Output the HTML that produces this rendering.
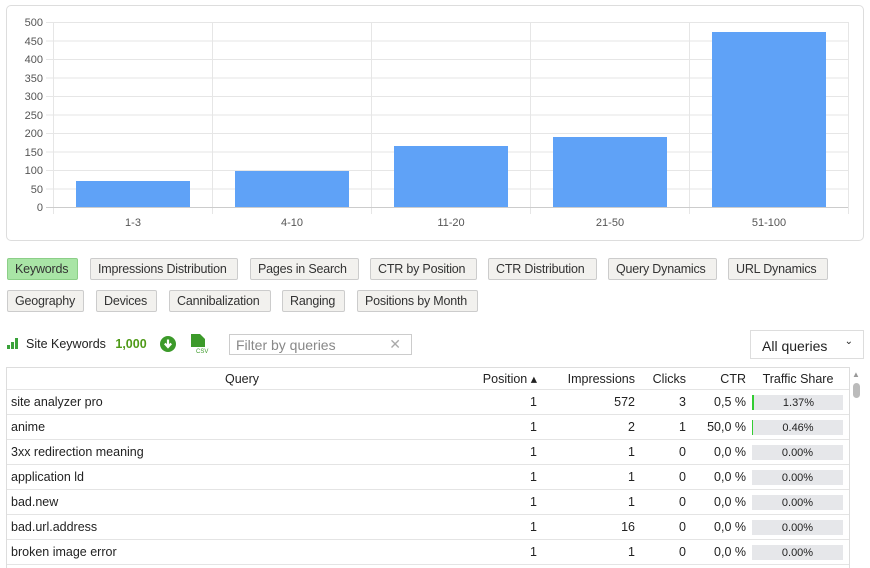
<!DOCTYPE html><html><head><style>
body{margin:0;width:870px;height:568px;overflow:hidden;background:#fff;font-family:"Liberation Sans",sans-serif;font-size:12.5px;color:#222;position:relative}
.card{position:absolute;left:6px;top:5px;width:858px;height:236px;border:1px solid #ddd;border-radius:5px;box-sizing:border-box}
.btn{position:absolute;height:22px;line-height:21px;padding:0 7px;background:#f2f1ee;border:1px solid #ccc;border-radius:2px;box-sizing:border-box;font-size:12.5px;letter-spacing:-0.2px;color:#333}
.btn.on{background:#a9e5a6;border-color:#8ccf88}
.abs{position:absolute}
table{border-collapse:collapse;font-size:12.5px;table-layout:fixed}
td,th{height:24px;padding:0;border-bottom:1px solid #e4e4e4;white-space:nowrap;vertical-align:middle;line-height:14px}
th{font-weight:normal;height:21px;background:#fff}
.r{text-align:right}
.bar{width:91px;height:15px;background:#e6e7ea;font-size:11px;text-align:center;line-height:16px;margin-left:6px;position:relative;box-sizing:border-box}
</style></head><body>
<div class="card"></div>
<svg class="abs" style="left:0;top:0" width="870" height="240" font-family="Liberation Sans" font-size="11" fill="#555">
<g stroke="#e6e6e6" stroke-width="1">
<line x1="46" y1="22.5" x2="848" y2="22.5"/><line x1="46" y1="41" x2="848" y2="41"/><line x1="46" y1="59.5" x2="848" y2="59.5"/><line x1="46" y1="78" x2="848" y2="78"/><line x1="46" y1="96.5" x2="848" y2="96.5"/><line x1="46" y1="115" x2="848" y2="115"/><line x1="46" y1="133.5" x2="848" y2="133.5"/><line x1="46" y1="152" x2="848" y2="152"/><line x1="46" y1="170.5" x2="848" y2="170.5"/><line x1="46" y1="189" x2="848" y2="189"/>
<line x1="53.5" y1="22" x2="53.5" y2="214"/><line x1="212.5" y1="22" x2="212.5" y2="214"/><line x1="371.5" y1="22" x2="371.5" y2="214"/><line x1="530.5" y1="22" x2="530.5" y2="214"/><line x1="689.5" y1="22" x2="689.5" y2="214"/><line x1="848.5" y1="22" x2="848.5" y2="214"/>
</g>
<g fill="#5fa2f7"><rect x="76" y="181" width="114" height="26"/><rect x="235" y="171" width="114" height="36"/><rect x="394" y="146" width="114" height="61"/><rect x="553" y="137" width="114" height="70"/><rect x="712" y="32" width="114" height="175"/></g>
<line x1="46" y1="207.5" x2="848" y2="207.5" stroke="#ccc"/>
<g text-anchor="end"><text x="43" y="26">500</text><text x="43" y="63">400</text><text x="43" y="82">350</text><text x="43" y="45">450</text><text x="43" y="100">300</text><text x="43" y="119">250</text><text x="43" y="137">200</text><text x="43" y="156">150</text><text x="43" y="174">100</text><text x="43" y="193">50</text><text x="43" y="211">0</text></g>
<g text-anchor="middle"><text x="133" y="226">1-3</text><text x="292" y="226">4-10</text><text x="451" y="226">11-20</text><text x="610" y="226">21-50</text><text x="769" y="226">51-100</text></g>
</svg>
<div class="btn on" style="left:7px;top:258px;width:71px">Keywords</div>
<div class="btn" style="left:90px;top:258px;width:148px">Impressions Distribution</div>
<div class="btn" style="left:250px;top:258px;width:109px">Pages in Search</div>
<div class="btn" style="left:370px;top:258px;width:107px">CTR by Position</div>
<div class="btn" style="left:488px;top:258px;width:109px">CTR Distribution</div>
<div class="btn" style="left:608px;top:258px;width:109px">Query Dynamics</div>
<div class="btn" style="left:728px;top:258px;width:100px">URL Dynamics</div>
<div class="btn" style="left:7px;top:290px;width:77px">Geography</div>
<div class="btn" style="left:96px;top:290px;width:61px">Devices</div>
<div class="btn" style="left:169px;top:290px;width:102px">Cannibalization</div>
<div class="btn" style="left:282px;top:290px;width:63px">Ranging</div>
<div class="btn" style="left:357px;top:290px;width:121px">Positions by Month</div>
<svg class="abs" style="left:7px;top:338px" width="12" height="12"><rect x="0" y="7" width="3" height="4" fill="#3aa23a"/><rect x="4" y="4" width="3" height="7" fill="#3aa23a"/><rect x="8" y="0" width="3" height="11" fill="#3aa23a"/></svg>
<div class="abs" style="left:26px;top:337px">Site Keywords <b style="color:#4f9a18;margin-left:6px">1,000</b></div>
<svg class="abs" style="left:160px;top:336px" width="16" height="16"><circle cx="8" cy="8" r="8" fill="#3c9a2a"/><path d="M8 3.5v7M4.8 7.5 8 11l3.2-3.5" stroke="#fff" stroke-width="2.2" fill="none"/></svg>
<svg class="abs" style="left:191px;top:334px" width="18" height="20"><path d="M0 0h9l5 5v8H0z" fill="#3c9a2a"/><text x="5" y="19" font-size="6" fill="#3c9a2a" font-family="Liberation Sans">CSV</text></svg>
<div class="abs" style="left:229px;top:334px;width:183px;height:21px;border:1px solid #ccc;box-sizing:border-box;color:#888;font-size:14px;padding:2px 6px">Filter by queries<span style="position:absolute;right:10px;top:1px;color:#aaa">✕</span></div>
<div class="abs" style="left:750px;top:330px;width:114px;height:29px;border:1px solid #ddd;box-sizing:border-box;font-size:14px;padding:7px 11px">All queries<span style="position:absolute;right:10px;top:5px;font-size:10px">⌄</span></div>
<div class="abs" style="left:6px;top:367px;width:844px;height:201px;border:1px solid #ddd;border-bottom:none;box-sizing:border-box;overflow:hidden">
<table style="width:843px">
<tr><th style="width:470px">Query</th><th class="r" style="width:60px">Position ▴</th><th class="r" style="width:98px">Impressions</th><th class="r" style="width:51px">Clicks</th><th class="r" style="width:60px">CTR</th><th>Traffic Share</th></tr>
<tr><td style="padding-left:4px">site analyzer pro</td><td class="r">1</td><td class="r">572</td><td class="r">3</td><td class="r">0,5 %</td><td><div class="bar" style="border-left:2px solid #3c3">1.37%</div></td></tr>
<tr><td style="padding-left:4px">anime</td><td class="r">1</td><td class="r">2</td><td class="r">1</td><td class="r">50,0 %</td><td><div class="bar" style="border-left:1px solid #3c3">0.46%</div></td></tr>
<tr><td style="padding-left:4px">3xx redirection meaning</td><td class="r">1</td><td class="r">1</td><td class="r">0</td><td class="r">0,0 %</td><td><div class="bar">0.00%</div></td></tr>
<tr><td style="padding-left:4px">application ld</td><td class="r">1</td><td class="r">1</td><td class="r">0</td><td class="r">0,0 %</td><td><div class="bar">0.00%</div></td></tr>
<tr><td style="padding-left:4px">bad.new</td><td class="r">1</td><td class="r">1</td><td class="r">0</td><td class="r">0,0 %</td><td><div class="bar">0.00%</div></td></tr>
<tr><td style="padding-left:4px">bad.url.address</td><td class="r">1</td><td class="r">16</td><td class="r">0</td><td class="r">0,0 %</td><td><div class="bar">0.00%</div></td></tr>
<tr><td style="padding-left:4px">broken image error</td><td class="r">1</td><td class="r">1</td><td class="r">0</td><td class="r">0,0 %</td><td><div class="bar">0.00%</div></td></tr>
</table></div>
<div class="abs" style="left:852px;top:370px;font-size:8px;color:#999">▲</div>
<div class="abs" style="left:853px;top:383px;width:7px;height:15px;border-radius:4px;background:#bbb"></div>
</body></html>
